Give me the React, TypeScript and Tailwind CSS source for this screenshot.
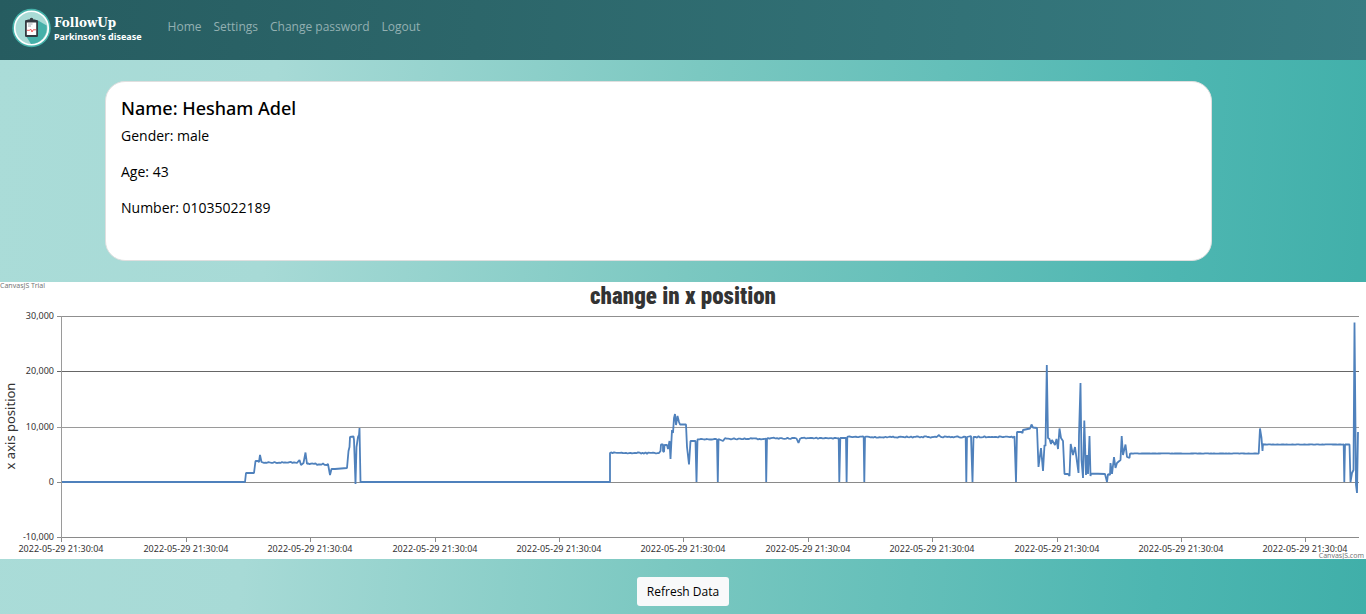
const navLinks = ["Home", "Settings", "Change password", "Logout"];

const yTicks = [
  { label: "30,000", y: 34.5, color: "#8f8f8f" },
  { label: "20,000", y: 89.5, color: "#666666" },
  { label: "10,000", y: 145.5, color: "#9a9a9a" },
  { label: "0", y: 200.5, color: "#8a8a8a" },
  { label: "-10,000", y: 255.5, color: "#8a8a8a" },
];

const xTicks = [61, 186, 310, 435, 559, 683, 808, 932, 1057, 1181, 1305];

type Point = [number, number];

// A level stretch of samples with a little sensor noise.
function level(from: number, to: number, y: number, noise: number): Point[] {
  const points: Point[] = [];
  let seed = Math.round(from * 7 + to);
  for (let x = from; x <= to; x += 1.5) {
    seed = (seed * 9301 + 49297) % 233280;
    points.push([x, y + (seed / 233280 - 0.5) * noise]);
  }
  return points;
}

const series: Point[] = [
  [62, 200], [245, 200], [246, 191], [254, 191], [255.5, 179], [258, 179], [259, 180], [260, 173], [261.5, 180],
  ...level(264, 298, 180.5, 1.2),
  [299.5, 178], [301, 183], [303.5, 181], [305.5, 170.5], [307, 182],
  ...level(308, 325, 182, 1.6),
  [327, 183], [328, 182], [330, 193], [331.5, 187], [335, 187], [347, 186], [348.5, 169], [349.5, 165], [350, 155],
  [353.5, 154.5], [354, 158], [355.5, 202], [356.5, 165], [358, 155], [359, 153], [359.5, 146], [360.5, 200],
  [610, 200], [610, 171],
  ...level(611, 660, 171, 1.4),
  [660.5, 169], [661, 162.5], [663, 162.5], [663, 169], [664, 170], [664.5, 163], [667, 163], [668, 167],
  [669.5, 159], [670.5, 177], [672, 148], [673, 151], [674, 136], [675, 132], [676, 143], [677.5, 134], [679, 140],
  [680, 142.5], [686, 142.5], [687, 165], [689, 182.5], [690.5, 159], [695.5, 159], [696.5, 200], [697.5, 157.5],
  ...level(698, 716, 157.3, 1),
  [717, 157.5], [717.8, 200], [718.5, 157], [723, 159],
  ...level(725, 765, 156.8, 1.3),
  [765.7, 156.5], [766.2, 200], [767, 156.5],
  ...level(768, 797, 156.3, 1.3),
  [798.5, 161],
  ...level(800, 838, 156.2, 1.2),
  [838.7, 156], [839.3, 200], [840.3, 156], [846, 156], [846.6, 200], [847.3, 155],
  ...level(848, 863, 155, 1.2),
  [863.7, 155], [864.3, 200], [865, 155],
  ...level(866, 937, 155, 1.5),
  [939, 153],
  ...level(940, 965, 155, 1.4),
  [965.7, 155], [966.3, 200], [967, 155], [971, 154], [972.5, 200], [973.5, 155],
  ...level(974, 1015, 155, 1.4),
  [1016, 200], [1017, 150], [1021.5, 150], [1022.5, 151], [1023, 148], [1030, 146.5], [1031.5, 142.5],
  [1033, 145.5], [1037, 146], [1038.5, 185], [1041, 166], [1043, 189], [1044.5, 163], [1045.5, 164], [1046.8, 83],
  [1048, 156], [1049.5, 157], [1051, 162], [1052, 158], [1055, 163], [1056.5, 157], [1058, 167], [1059.5, 146.5],
  [1061, 156], [1063, 159], [1064.5, 192], [1068, 192], [1069.5, 194], [1070.7, 162], [1073, 173], [1075, 165],
  [1078.5, 191], [1079, 153], [1080.5, 101], [1081.5, 178], [1083, 196], [1084.3, 138.5], [1086, 193], [1087, 173],
  [1088, 192], [1089.5, 154], [1090.5, 194], [1091, 191.5], [1105, 192], [1107, 200], [1108, 192], [1110, 193],
  [1110.5, 181], [1112, 192], [1114, 175], [1115.5, 186], [1117, 181], [1120.5, 178], [1121.7, 154], [1123, 173],
  [1125.5, 162.5], [1127, 175], [1129.5, 176],
  ...level(1130, 1258, 171.5, 0.5),
  [1258.7, 171.5], [1260, 146.5], [1261.5, 156], [1262.5, 169], [1263, 162],
  ...level(1264, 1343, 162.5, 0.5),
  [1343.7, 162.5], [1344.3, 200], [1345, 162.5], [1349.5, 162.5], [1350.5, 200], [1352, 191], [1353.5, 188],
  [1354.5, 40.5], [1356, 203], [1357, 211], [1358, 150],
];

const linePoints = series.map(([x, y]) => `${x},${y.toFixed(1)}`).join(" ");

function Logo() {
  return (
    <svg className="size-10 shrink-0" viewBox="0 0 40 40" aria-hidden="true">
      <circle cx="19.5" cy="20" r="19.2" fill="#46b2aa" />
      <circle cx="19.5" cy="20" r="16.8" fill="#a9dbd6" stroke="#fff" strokeWidth="1.6" />
      <path d="M26 12.5 34.7 17.5A16 16 0 0 1 19 36L14 28Z" fill="#45b0a9" />
      <rect x="13" y="12" width="13" height="17" rx="1.2" fill="#343b42" />
      <path d="M15.5 11.5h2.2a1.8 1.8 0 0 1 3.6 0h2.2v3h-8z" fill="#343b42" />
      <rect x="14.8" y="14.5" width="9.4" height="12.5" fill="#fff" />
      <path d="M16 16h4.5M16 18h3" stroke="#9aa3a8" strokeWidth="0.9" />
      <path d="M15 22.3h2.7l1-1.3 1.3 3 1.2-2.2h2.8" fill="none" stroke="#ee5a5a" strokeWidth="1" />
    </svg>
  );
}

function PositionChart() {
  return (
    <svg
      className="block w-full bg-white font-['Noto_Sans','Open_Sans',sans-serif]"
      viewBox="0 0 1366 277"
      role="img"
      aria-label="change in x position"
    >
      <text x="0" y="6" fontSize="7" fill="#777">CanvasJS Trial</text>
      <text
        x="683"
        y="22"
        textAnchor="middle"
        fontSize="23"
        fontWeight="900"
        fill="#333"
        className="font-['Impact','Roboto_Condensed','Roboto',sans-serif]"
      >
        change in x position
      </text>
      {yTicks.map((t) => (
        <g key={t.label}>
          <line x1="57" x2="1359" y1={t.y} y2={t.y} stroke={t.color} />
          <text x="54" y={Math.floor(t.y) + 3} textAnchor="end" fontSize="9" fill="#333">{t.label}</text>
        </g>
      ))}
      <line x1="61.5" x2="61.5" y1="34" y2="256" stroke="#9a9a9a" />
      {xTicks.map((x) => (
        <g key={x}>
          <line x1={x + 0.5} x2={x + 0.5} y1="256" y2="260" stroke="#8a8a8a" />
          <text x={x} y="270" textAnchor="middle" fontSize="9" fill="#333">2022-05-29 21:30:04</text>
        </g>
      ))}
      <text transform="translate(15 144) rotate(-90)" textAnchor="middle" fontSize="13" fill="#333">
        x axis position
      </text>
      <polyline points={linePoints} fill="none" stroke="#4f81bc" strokeWidth="1.8" strokeLinejoin="bevel" />
      <text x="1364" y="276" textAnchor="end" fontSize="7" fill="#777">CanvasJS.com</text>
    </svg>
  );
}

export default function App() {
  return (
    <div className="min-h-screen bg-[linear-gradient(94deg,#aadcd8_0%,#a7dad6_20%,#7bc8c1_50%,#4db6b1_85%,#40afa9_100%)] font-['Open_Sans','Noto_Sans',sans-serif] text-black">
      <header className="flex h-15 items-center bg-[linear-gradient(94deg,#265c60,#2c666a_35%,#377c82)] px-3 pb-1">
        <a href="#home" className="flex items-center gap-0.5 text-white">
          <Logo />
          <span className="flex flex-col pt-1">
            <span className="font-['Cooper_Black','DejaVu_Serif',serif] text-xs leading-[13px] font-black">FollowUp</span>
            <span className="font-['Noto_Sans',sans-serif] text-[9px] leading-[13px] font-bold">Parkinson's disease</span>
          </span>
        </a>
        <nav className="ml-[26px] flex gap-3 pb-0.5 text-xs text-[#93b0b2]">
          {navLinks.map((label) => (
            <a key={label} href={`#${label.toLowerCase().replace(" ", "-")}`}>{label}</a>
          ))}
        </nav>
      </header>

      <main>
        <section className="mt-[21px] mr-[154px] mb-[21px] ml-[105px] min-h-[180px] rounded-[20px] border border-[#dfdfdf] bg-white px-[15px] py-[15px]">
          <h1 className="font-['Noto_Sans',sans-serif] text-lg leading-[22px] font-medium">Name: Hesham Adel</h1>
          <div className="mt-[5px] flex flex-col gap-3 text-sm leading-6">
            <p>Gender: male</p>
            <p>Age: 43</p>
            <p>Number: 01035022189</p>
          </div>
        </section>

        <PositionChart />

        <div className="flex justify-center pt-[18px] pb-2">
          <button type="button" className="rounded-[3px] bg-[#f8f9fa] px-2.5 py-1 text-xs leading-[21px]">
            Refresh Data
          </button>
        </div>
      </main>
    </div>
  );
}
